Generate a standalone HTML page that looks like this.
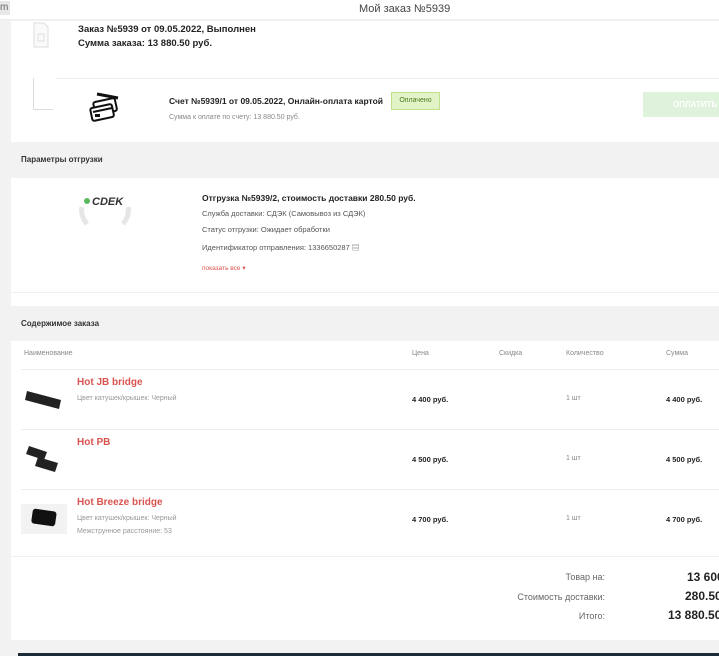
<!DOCTYPE html>
<html><head><meta charset="utf-8"><style>
*{margin:0;padding:0;box-sizing:border-box}
body{width:719px;height:656px;overflow:hidden;background:#f2f2f2;font-family:"Liberation Sans","Noto Sans CJK SC",sans-serif;color:#222;position:relative}
.a{position:absolute;white-space:nowrap}
.b{font-weight:bold}
.g{color:#888}
.r{color:#d9534f}
</style></head><body>
<div class="a" style="left:0;top:0;width:719px;height:20px;background:#fff;border-bottom:1px solid #eee"></div>
<div class="a" style="left:0;top:1px;width:10px;height:14px;background:#e8e8e8;font-size:10px;color:#666;line-height:14px">m</div>
<div class="a" style="left:359px;top:3px;font-size:11px;color:#444">Мой заказ №5939</div>
<div class="a" style="left:11px;top:21px;width:708px;height:619px;background:#fff"></div>
<svg class="a" style="left:33px;top:22px" width="16" height="26" viewBox="0 0 16 26"><path d="M1 1h10l4 4v20H1z" fill="#fafafa" stroke="#ddd"/><path d="M5 12h6v7H5z" fill="none" stroke="#e0e0e0"/></svg>
<div class="a b" style="left:78px;top:24px;font-size:9.5px">Заказ №5939 от 09.05.2022, Выполнен</div>
<div class="a b" style="left:78px;top:38px;font-size:9.5px">Сумма заказа: 13 880.50 руб.</div>
<div class="a" style="left:33px;top:78px;width:1px;height:32px;background:#ddd"></div>
<div class="a" style="left:33px;top:109px;width:20px;height:1px;background:#ddd"></div>
<div class="a" style="left:56px;top:78px;width:663px;height:1px;background:#f0f0f0"></div>
<svg class="a" style="left:88px;top:92px" width="36" height="32" viewBox="0 0 36 32"><path d="M9 2l21 4" stroke="#111" stroke-width="3"/><rect x="6" y="8" width="22" height="13" rx="2" transform="rotate(-12 17 14)" fill="#fff" stroke="#111" stroke-width="2"/><rect x="3" y="14" width="22" height="13" rx="2" transform="rotate(-12 14 20)" fill="#fff" stroke="#111" stroke-width="2"/><path d="M5 20l19-4" stroke="#111" stroke-width="2"/><rect x="7" y="22" width="5" height="3" fill="#111"/></svg>
<div class="a b" style="left:169px;top:96px;font-size:8.5px">Счет №5939/1 от 09.05.2022, Онлайн-оплата картой</div>
<div class="a" style="left:391px;top:92px;width:49px;height:18px;background:#e3f3c8;border:1px solid #bfe08c;font-size:7px;color:#4a7a1a;text-align:center;line-height:16px">Оплачено</div>
<div class="a g" style="left:169px;top:114px;font-size:7px">Сумма к оплате по счету: 13 880.50 руб.</div>
<div class="a" style="left:643px;top:92px;width:76px;height:25px;background:#dff2dc;color:#fff;font-size:8px;line-height:25px;padding-left:30px;font-weight:bold">ОПЛАТИТЬ</div>
<div class="a" style="left:11px;top:142px;width:708px;height:36px;background:#f2f2f2"></div>
<div class="a b" style="left:21px;top:155px;font-size:8px;color:#333">Параметры отгрузки</div>
<svg class="a" style="left:78px;top:193px" width="56" height="34" viewBox="0 0 56 34"><circle cx="9" cy="8" r="3" fill="#5cb85c"/><text x="14" y="12" font-family="Liberation Sans" font-style="italic" font-weight="bold" font-size="11" fill="#333">CDEK</text><path d="M4 14q-2 8 5 17M50 14q2 8-5 17" stroke="#e6e6e6" stroke-width="5" fill="none"/></svg>
<div class="a b" style="left:202px;top:193px;font-size:8.5px">Отгрузка №5939/2, стоимость доставки 280.50 руб.</div>
<div class="a" style="left:202px;top:209px;font-size:7.5px;color:#555">Служба доставки: СДЭК (Самовывоз из СДЭК)</div>
<div class="a" style="left:202px;top:225px;font-size:7.5px;color:#555">Статус отгрузки: Ожидает обработки</div>
<div class="a" style="left:202px;top:242px;font-size:7.5px;color:#555">Идентификатор отправления: 1336650287 ▤</div>
<div class="a r" style="left:202px;top:264px;font-size:6.5px">показать все ▾</div>
<div class="a" style="left:11px;top:292px;width:708px;height:1px;background:#f0f0f0"></div>
<div class="a" style="left:11px;top:306px;width:708px;height:35px;background:#f2f2f2"></div>
<div class="a b" style="left:21px;top:319px;font-size:8px;color:#333">Содержимое заказа</div>
<div class="a g" style="left:24px;top:350px;font-size:7px">Наименование</div>
<div class="a g" style="left:412px;top:350px;font-size:7px">Цена</div>
<div class="a g" style="left:499px;top:350px;font-size:7px">Скидка</div>
<div class="a g" style="left:566px;top:350px;font-size:7px">Количество</div>
<div class="a g" style="left:666px;top:350px;font-size:7px">Сумма</div>
<div class="a" style="left:21px;top:369px;width:698px;height:1px;background:#eee"></div>
<div class="a" style="left:21px;top:429px;width:698px;height:1px;background:#eee"></div>
<div class="a" style="left:21px;top:489px;width:698px;height:1px;background:#eee"></div>
<div class="a" style="left:11px;top:556px;width:708px;height:1px;background:#f0f0f0"></div>
<svg class="a" style="left:24px;top:386px" width="40" height="28" viewBox="0 0 40 28"><path d="M3 5l34 9-2 9-34-9z" fill="#222"/></svg>
<svg class="a" style="left:26px;top:444px" width="36" height="30" viewBox="0 0 36 30"><path d="M3 2l18 6-3 8-18-6z M12 13l20 6-3 9-20-6z" fill="#222"/></svg>
<div class="a" style="left:21px;top:504px;width:46px;height:30px;background:#f2f2f2"></div>
<svg class="a" style="left:30px;top:507px" width="28" height="22" viewBox="0 0 28 22"><rect x="2" y="3" width="24" height="15" rx="3" fill="#111" transform="rotate(8 14 10)"/></svg>
<div class="a b r" style="left:77px;top:377px;font-size:10px">Hot JB bridge</div>
<div class="a g" style="left:77px;top:395px;font-size:7px;color:#999">Цвет катушек/крышек: Черный</div>
<div class="a b r" style="left:77px;top:437px;font-size:10px">Hot PB</div>
<div class="a b r" style="left:77px;top:497px;font-size:10px">Hot Breeze bridge</div>
<div class="a g" style="left:77px;top:515px;font-size:7px;color:#999">Цвет катушек/крышек: Черный</div>
<div class="a g" style="left:77px;top:528px;font-size:7px;color:#999">Межструнное расстояние: 53</div>
<div class="a b" style="left:412px;top:395px;font-size:7.5px">4 400 руб.</div>
<div class="a g" style="left:566px;top:395px;font-size:7px">1 шт</div>
<div class="a b" style="left:666px;top:395px;font-size:7.5px">4 400 руб.</div>
<div class="a b" style="left:412px;top:455px;font-size:7.5px">4 500 руб.</div>
<div class="a g" style="left:566px;top:455px;font-size:7px">1 шт</div>
<div class="a b" style="left:666px;top:455px;font-size:7.5px">4 500 руб.</div>
<div class="a b" style="left:412px;top:515px;font-size:7.5px">4 700 руб.</div>
<div class="a g" style="left:566px;top:515px;font-size:7px">1 шт</div>
<div class="a b" style="left:666px;top:515px;font-size:7.5px">4 700 руб.</div>
<div class="a" style="right:114px;top:572px;font-size:9px;color:#666">Товар на:</div>
<div class="a" style="right:114px;top:592px;font-size:9px;color:#666">Стоимость доставки:</div>
<div class="a" style="right:114px;top:611px;font-size:9px;color:#666">Итого:</div>
<div class="a b" style="left:687px;top:570px;font-size:12px">13 600</div>
<div class="a b" style="left:685px;top:589px;font-size:12px">280.50</div>
<div class="a b" style="left:668px;top:608px;font-size:12px">13 880.50</div>
<div class="a" style="left:18px;top:653px;width:701px;height:3px;background:#1d2b36"></div>
</body></html>
